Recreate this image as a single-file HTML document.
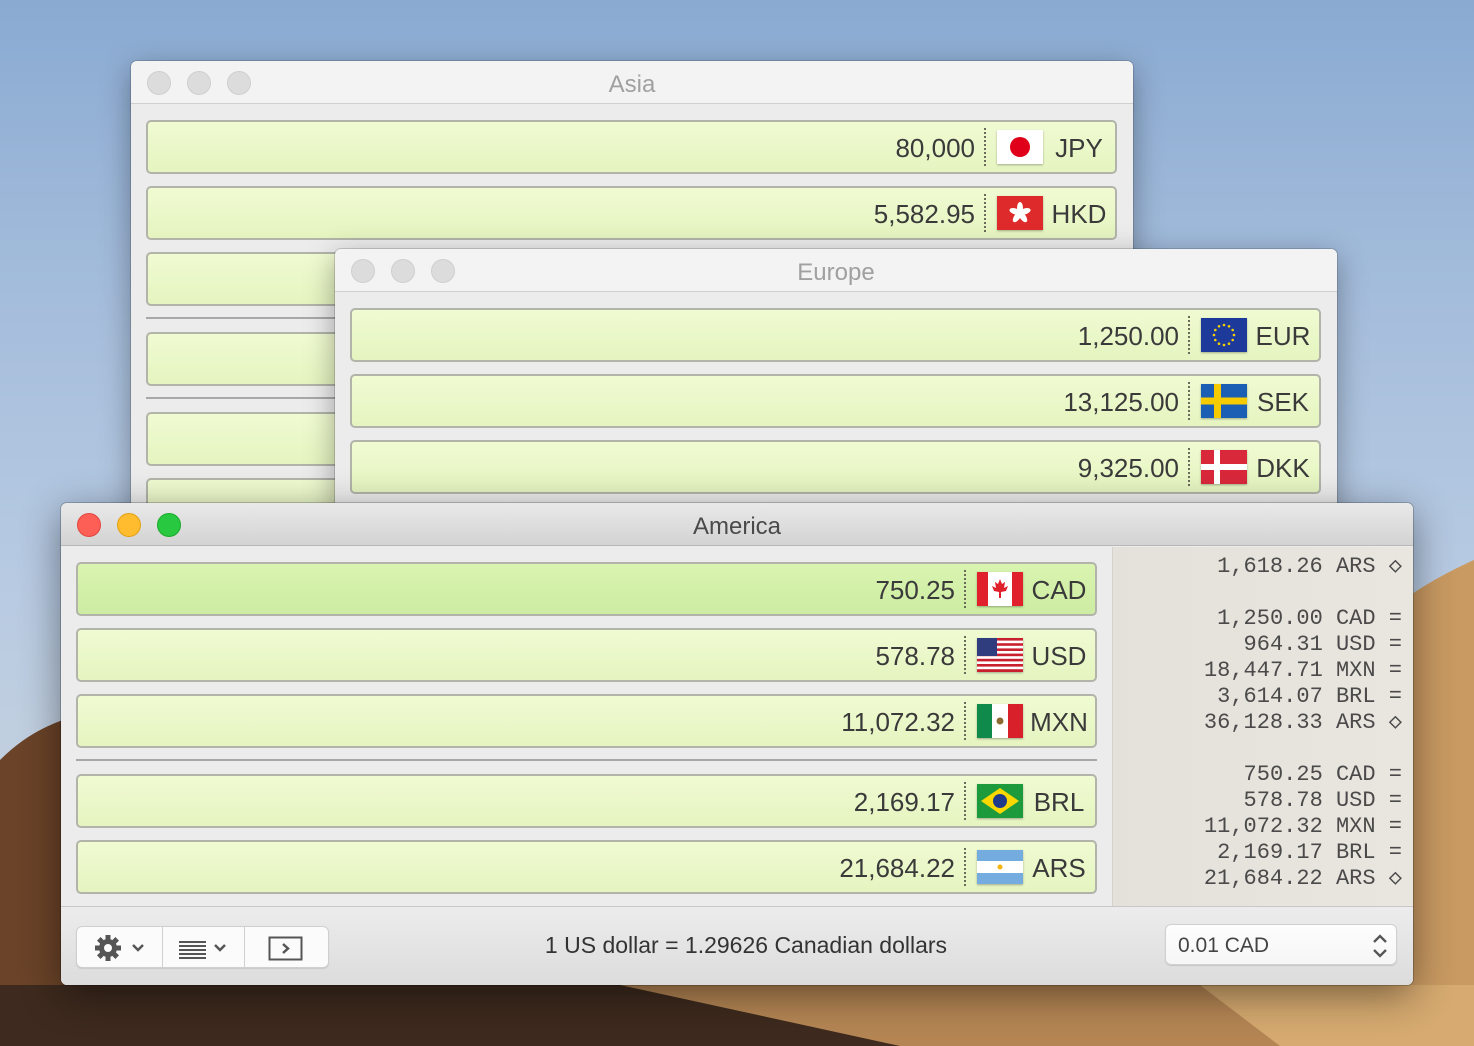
<!DOCTYPE html>
<html><head><meta charset="utf-8"><style>
*{box-sizing:border-box;margin:0;padding:0}
body{width:1474px;height:1046px;overflow:hidden;position:relative;font-family:"Liberation Sans",sans-serif;
background:linear-gradient(180deg,#8aaad2 0%,#a6bedc 30%,#b7cae2 55%,#c0cfe0 70%,#b9c4cf 100%)}
.bg{position:absolute;inset:0}
.win{position:absolute;border-radius:6px;overflow:hidden;box-shadow:0 8px 30px rgba(0,0,0,.35),0 0 0 1px rgba(0,0,0,.15)}
.tb{position:absolute;left:0;right:0;top:0;height:43px;border-bottom:1px solid #d0d0d0;text-align:center;line-height:47px;font-size:24px}
.dot{position:absolute;top:10px;width:24px;height:24px;border-radius:50%}
.row{position:absolute;height:54px;border:2px solid #b2b4aa;border-radius:5px;background:linear-gradient(180deg,#f0fbd2,#e5f4c0)}
.row.sel{background:linear-gradient(180deg,#d9f4b0,#cdeca2)}
.row .v{position:absolute;right:140px;top:1px;line-height:50px;font-size:26px;color:#3a3a3a}
.row .d{position:absolute;right:129px;top:6px;height:38px;border-left:2px dotted #6a6a5a}
.row .f{position:absolute;right:72px;top:8px;width:46px;height:34px;box-shadow:0 1px 2px rgba(0,0,0,.3)}
.row .c{position:absolute;right:6px;width:60px;text-align:center;top:1px;line-height:50px;font-size:26px;color:#3a3a3a}
.sep{position:absolute;height:2px;background:#a8a8a8}
.mono{font-family:"Liberation Mono","DejaVu Sans Mono",monospace;font-size:22px;color:#4a4a4a;line-height:26px;text-align:right;white-space:pre}
</style></head><body>
<svg class="bg" width="1474" height="1046">
<path d="M1474 560 C1430 580 1400 600 1380 620 L1380 1046 L1474 1046Z" fill="#c99a62"/>
<path d="M0 760 C30 730 60 720 80 715 L80 1046 L0 1046Z" fill="#6a4328"/>
<path d="M0 985 L1474 985 L1474 1046 L0 1046Z" fill="#3e2a1e"/>
<path d="M620 985 L1474 985 L1474 1046 L900 1046Z" fill="#b58654"/>
<path d="M1200 985 L1474 985 L1474 1046 L1280 1046Z" fill="#d6aa70"/>
</svg>

<!-- Asia -->
<div class="win" style="left:131px;top:61px;width:1002px;height:460px;background:#ececec">
 <div class="tb" style="background:#f3f3f3;color:#a0a0a0">Asia</div>
 <div class="dot" style="left:16px;background:#dcdcdc;border:1px solid #cfcfcf"></div>
 <div class="dot" style="left:56px;background:#dcdcdc;border:1px solid #cfcfcf"></div>
 <div class="dot" style="left:96px;background:#dcdcdc;border:1px solid #cfcfcf"></div>
 <div class="row" style="left:15px;top:59px;width:971px"><span class="v">80,000</span><span class="d"></span>
  <svg class="f" viewBox="0 0 46 34"><rect width="46" height="34" fill="#fff"/><circle cx="23" cy="17" r="10" fill="#e0001a"/></svg><span class="c">JPY</span></div>
 <div class="row" style="left:15px;top:125px;width:971px"><span class="v">5,582.95</span><span class="d"></span>
  <svg class="f" viewBox="0 0 46 34"><rect width="46" height="34" fill="#de2a2a"/><g fill="#fff" transform="translate(23 17)"><ellipse rx="3" ry="6" transform="rotate(0) translate(0 -5)"/><ellipse rx="3" ry="6" transform="rotate(72) translate(0 -5)"/><ellipse rx="3" ry="6" transform="rotate(144) translate(0 -5)"/><ellipse rx="3" ry="6" transform="rotate(216) translate(0 -5)"/><ellipse rx="3" ry="6" transform="rotate(288) translate(0 -5)"/></g></svg><span class="c">HKD</span></div>
 <div class="row" style="left:15px;top:191px;width:971px"></div>
 <div class="sep" style="left:15px;top:256px;width:971px"></div>
 <div class="row" style="left:15px;top:271px;width:971px"></div>
 <div class="sep" style="left:15px;top:336px;width:971px"></div>
 <div class="row" style="left:15px;top:351px;width:971px"></div>
 <div class="row" style="left:15px;top:417px;width:971px"></div>
</div>

<!-- Europe -->
<div class="win" style="left:335px;top:249px;width:1002px;height:272px;background:#ececec">
 <div class="tb" style="background:#f3f3f3;color:#a0a0a0">Europe</div>
 <div class="dot" style="left:16px;background:#dcdcdc;border:1px solid #cfcfcf"></div>
 <div class="dot" style="left:56px;background:#dcdcdc;border:1px solid #cfcfcf"></div>
 <div class="dot" style="left:96px;background:#dcdcdc;border:1px solid #cfcfcf"></div>
 <div class="row" style="left:15px;top:59px;width:971px"><span class="v">1,250.00</span><span class="d"></span>
  <svg class="f" viewBox="0 0 46 34"><rect width="46" height="34" fill="#1d3a9a"/><g fill="#f5d000"><circle cx="23" cy="7" r="1.3"/><circle cx="28" cy="8.3" r="1.3"/><circle cx="31.7" cy="12" r="1.3"/><circle cx="33" cy="17" r="1.3"/><circle cx="31.7" cy="22" r="1.3"/><circle cx="28" cy="25.7" r="1.3"/><circle cx="23" cy="27" r="1.3"/><circle cx="18" cy="25.7" r="1.3"/><circle cx="14.3" cy="22" r="1.3"/><circle cx="13" cy="17" r="1.3"/><circle cx="14.3" cy="12" r="1.3"/><circle cx="18" cy="8.3" r="1.3"/></g></svg><span class="c">EUR</span></div>
 <div class="row" style="left:15px;top:125px;width:971px"><span class="v">13,125.00</span><span class="d"></span>
  <svg class="f" viewBox="0 0 46 34"><rect width="46" height="34" fill="#1a5fb4"/><rect x="13" width="7" height="34" fill="#f6cc00"/><rect y="13.5" width="46" height="7" fill="#f6cc00"/></svg><span class="c">SEK</span></div>
 <div class="row" style="left:15px;top:191px;width:971px"><span class="v">9,325.00</span><span class="d"></span>
  <svg class="f" viewBox="0 0 46 34"><rect width="46" height="34" fill="#d8283a"/><rect x="13" width="6" height="34" fill="#fff"/><rect y="14" width="46" height="6" fill="#fff"/></svg><span class="c">DKK</span></div>
</div>

<!-- America -->
<div class="win" style="left:61px;top:503px;width:1352px;height:482px;background:#ececec;box-shadow:0 10px 40px rgba(0,0,0,.45),0 0 0 1px rgba(0,0,0,.2)">
 <div class="tb" style="background:linear-gradient(180deg,#e9e9e9,#d3d3d3);color:#4a4a4a;border-bottom:1px solid #b8b8b8">America</div>
 <div class="dot" style="left:16px;background:#fd5f57;border:1px solid #e2463f"></div>
 <div class="dot" style="left:56px;background:#febc2e;border:1px solid #e1a116"></div>
 <div class="dot" style="left:96px;background:#28c840;border:1px solid #1aab29"></div>
 <div class="row sel" style="left:15px;top:59px;width:1021px"><span class="v">750.25</span><span class="d"></span>
  <svg class="f" viewBox="0 0 46 34"><rect width="46" height="34" fill="#fff"/><rect width="11" height="34" fill="#e0202a"/><rect x="35" width="11" height="34" fill="#e0202a"/><path d="M23 7 L25 12 L28 10 L27 16 L31 14 L29 19 L24 20 L24 26 L22 26 L22 20 L17 19 L15 14 L19 16 L18 10 L21 12Z" fill="#e0202a"/></svg><span class="c">CAD</span></div>
 <div class="row" style="left:15px;top:125px;width:1021px"><span class="v">578.78</span><span class="d"></span>
  <svg class="f" viewBox="0 0 46 34"><rect width="46" height="34" fill="#fff"/><g fill="#c8202e"><rect y="0" width="46" height="2.6"/><rect y="5.2" width="46" height="2.6"/><rect y="10.4" width="46" height="2.6"/><rect y="15.6" width="46" height="2.6"/><rect y="20.8" width="46" height="2.6"/><rect y="26" width="46" height="2.6"/><rect y="31.2" width="46" height="2.8"/></g><rect width="20" height="18" fill="#2f3c7e"/></svg><span class="c">USD</span></div>
 <div class="row" style="left:15px;top:191px;width:1021px"><span class="v">11,072.32</span><span class="d"></span>
  <svg class="f" viewBox="0 0 46 34"><rect width="46" height="34" fill="#fff"/><rect width="15" height="34" fill="#108a4a"/><rect x="31" width="15" height="34" fill="#d8202a"/><circle cx="23" cy="17" r="3.5" fill="#8a6a30"/></svg><span class="c">MXN</span></div>
 <div class="sep" style="left:15px;top:256px;width:1021px"></div>
 <div class="row" style="left:15px;top:271px;width:1021px"><span class="v">2,169.17</span><span class="d"></span>
  <svg class="f" viewBox="0 0 46 34"><rect width="46" height="34" fill="#1c9a3c"/><path d="M23 4 L42 17 L23 30 L4 17Z" fill="#f8d800"/><circle cx="23" cy="17" r="7" fill="#1f3a8a"/></svg><span class="c">BRL</span></div>
 <div class="row" style="left:15px;top:337px;width:1021px"><span class="v">21,684.22</span><span class="d"></span>
  <svg class="f" viewBox="0 0 46 34"><rect width="46" height="34" fill="#fff"/><rect width="46" height="11" fill="#74acdf"/><rect y="23" width="46" height="11" fill="#74acdf"/><circle cx="23" cy="17" r="2.5" fill="#f6b40e"/></svg><span class="c">ARS</span></div>
 <!-- side panel -->
 <div style="position:absolute;left:1051px;top:44px;width:301px;height:359px;background:linear-gradient(90deg,#e4e1da,#e9e6df);border-left:1px solid #d4d2cc"></div>
 <div class="mono" style="position:absolute;right:11px;top:51px;width:280px">1,618.26 ARS ◇

1,250.00 CAD =
  964.31 USD =
18,447.71 MXN =
3,614.07 BRL =
36,128.33 ARS ◇

  750.25 CAD =
  578.78 USD =
11,072.32 MXN =
2,169.17 BRL =
21,684.22 ARS ◇</div>
 <!-- bottom bar -->
 <div style="position:absolute;left:0;right:0;top:403px;bottom:0;background:linear-gradient(180deg,#ececec,#dcdcdc);border-top:1px solid #c8c8c8"></div>
 <div style="position:absolute;left:15px;top:423px;width:253px;height:42px;background:#fbfbfb;border:1px solid #cfcfcf;border-radius:6px;box-shadow:0 1px 1px rgba(0,0,0,.1)">
  <div style="position:absolute;left:85px;top:0;height:40px;border-left:1px solid #d0d0d0"></div>
  <div style="position:absolute;left:167px;top:0;height:40px;border-left:1px solid #d0d0d0"></div>
  <svg style="position:absolute;left:16px;top:6px" width="60" height="30" viewBox="0 0 60 30">
   <g transform="translate(15 15)" fill="#555"><circle r="9"/><g><rect x="-2.5" y="-13" width="5" height="26"/><rect x="-2.5" y="-13" width="5" height="26" transform="rotate(45)"/><rect x="-2.5" y="-13" width="5" height="26" transform="rotate(90)"/><rect x="-2.5" y="-13" width="5" height="26" transform="rotate(135)"/></g><circle r="4" fill="#fbfbfb"/></g>
   <path d="M40 12 L45 17 L50 12" stroke="#555" stroke-width="2.5" fill="none"/></svg>
  <svg style="position:absolute;left:100px;top:6px" width="60" height="30" viewBox="0 0 60 30">
   <g fill="#555"><rect x="2" y="8" width="27" height="2"/><rect x="2" y="12" width="27" height="2"/><rect x="2" y="16" width="27" height="2"/><rect x="2" y="20" width="27" height="2"/><rect x="2" y="24" width="27" height="2"/></g>
   <path d="M38 12 L43 17 L48 12" stroke="#555" stroke-width="2.5" fill="none"/></svg>
  <svg style="position:absolute;left:191px;top:8px" width="36" height="28" viewBox="0 0 36 28">
   <rect x="1.5" y="2.5" width="32" height="22" fill="none" stroke="#555" stroke-width="2"/><path d="M15 9 L20 13.5 L15 18" stroke="#555" stroke-width="2.5" fill="none"/></svg>
 </div>
 <div style="position:absolute;left:380px;width:610px;top:429px;text-align:center;font-size:23px;color:#333">1 US dollar = 1.29626 Canadian dollars</div>
 <div style="position:absolute;left:1104px;top:421px;width:232px;height:41px;background:linear-gradient(180deg,#fdfdfd,#f6f6f6);border:1px solid #d0d0d0;border-radius:6px;box-shadow:0 1px 1px rgba(0,0,0,.12)">
  <span style="position:absolute;left:12px;top:9px;font-size:21px;color:#444">0.01 CAD</span>
  <svg style="position:absolute;right:6px;top:6px" width="20" height="30" viewBox="0 0 20 30"><path d="M4 11 L10 5 L16 11 M4 19 L10 25 L16 19" stroke="#555" stroke-width="2.3" fill="none"/></svg>
 </div>
</div>
</body></html>
